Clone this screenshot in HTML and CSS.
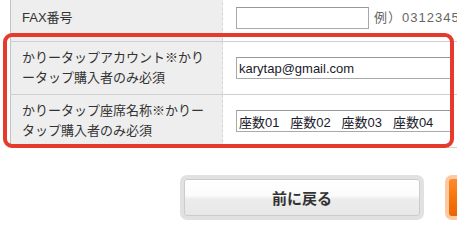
FILE: index.html
```html
<!DOCTYPE html>
<html lang="ja">
<head>
  <meta charset="UTF-8" />
  <meta name="viewport" content="width=device-width, initial-scale=1.0" />
  <title>入力フォーム</title>
  <link rel="stylesheet" href="styles.css">
</head>
<body>
  <div class="page">
    <table class="form-table">
      <tr class="row-fax">
        <th>FAX番号</th>
        <td><input type="text" class="input-short"><span class="example">例）0312345678</span></td>
      </tr>
      <tr>
        <th>かりータップアカウント※かりータップ購入者のみ必須</th>
        <td><input type="text" class="input-long" value="karytap@gmail.com"></td>
      </tr>
      <tr>
        <th>かりータップ座席名称※かりータップ購入者のみ必須</th>
        <td><input type="text" class="input-long" value="座数01   座数02   座数03   座数04"></td>
      </tr>
    </table>

    <div class="highlight"></div>

    <div class="buttons">
      <button class="btn btn-back">前に戻る</button>
      <button class="btn btn-next">確認画面へ</button>
    </div>
  </div>
</body>
</html>
```

FILE: styles.css
```css
html, body {
  margin: 0;
  overflow: hidden;
}
body {
  font-family: "Liberation Sans", "Noto Sans CJK JP", sans-serif;
  font-size: 13px;
  color: #333;
  background: #fff;
}
.page {
  position: relative;
  width: 900px;
}

.form-table {
  border-collapse: collapse;
  margin: -4px 0 0 10px;
  width: 700px;
}
.form-table th,
.form-table td {
  border-top: 1px solid #cfcfcf;
  border-bottom: 1px solid #cfcfcf;
  padding: 6px 13px;
  vertical-align: middle;
  line-height: 20px;
}
.form-table th {
  width: 189px;
  padding-left: 11px;
  padding-right: 11px;
  background: #eeeeee;
  border-left: 1px solid #c4c4c4;
  border-right: 1px dashed #d6d6d6;
  font-weight: normal;
  text-align: left;
}
.form-table tr.row-fax th,
.form-table tr.row-fax td {
  padding-top: 10px;
  padding-bottom: 12px;
}

input {
  box-sizing: border-box;
  height: 22px;
  margin: 0;
  padding: 0 2px;
  border: 1px solid #a9a9a9;
  border-top-color: #999;
  font-family: "Liberation Sans", "Noto Sans CJK JP", sans-serif;
  font-size: 13px;
  color: #1a1a2a;
  vertical-align: middle;
}
.input-short { width: 133px; }
.input-long { width: 216px; }

.example {
  margin-left: 5px;
  color: #666;
  letter-spacing: 1px;
  vertical-align: middle;
}

.highlight {
  position: absolute;
  left: 3px;
  top: 37px;
  width: 443px;
  height: 107px;
  border: 4px solid #e63a2c;
  border-radius: 9px;
}

.buttons {
  display: flex;
  gap: 21px;
  margin-top: 27px;
  padding-left: 180px;
}
.btn {
  box-sizing: border-box;
  width: 244px;
  height: 45px;
  border-radius: 7px;
  font-family: "Liberation Sans", "Noto Sans CJK JP", sans-serif;
  font-size: 15px;
  font-weight: bold;
  cursor: pointer;
}
.btn-back {
  border: 4px solid #e1e1e1;
  color: #333;
  background: linear-gradient(#ffffff 0%, #fbfbfb 45%, #ececec 55%, #e7e7e7 100%);
  box-shadow: inset 0 0 0 1px #cccccc;
}
.btn-next {
  border: 4px solid #fcc9a2;
  color: #fff;
  background: linear-gradient(#ff8a2c 0%, #f6750f 50%, #ec6300 100%);
}
```
